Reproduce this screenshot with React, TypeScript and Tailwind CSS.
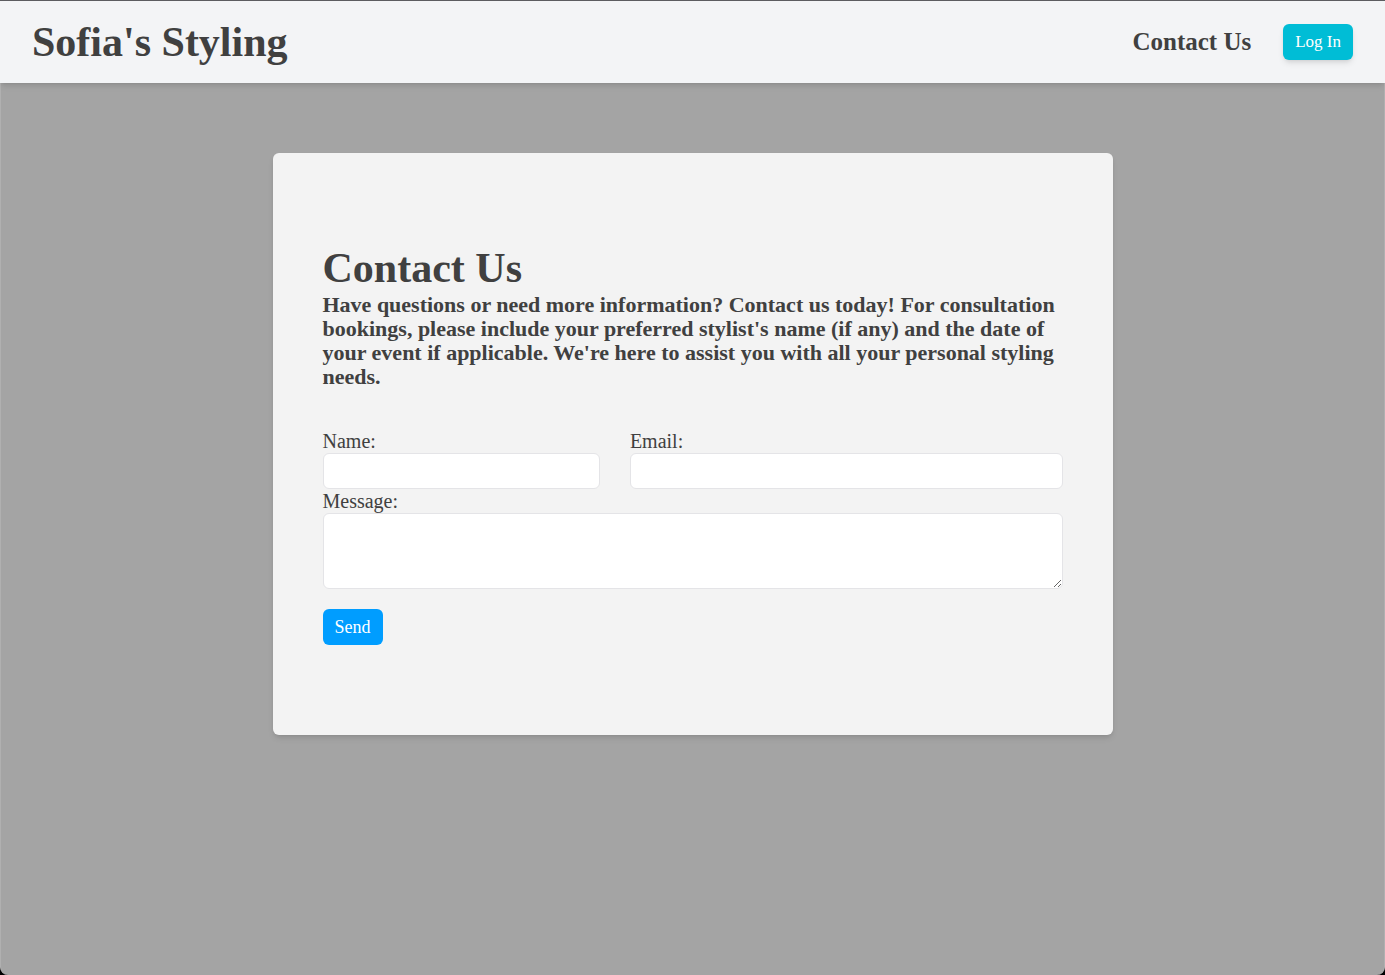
import React from "react";

const fieldClass =
  "block w-full rounded-md border border-[#e4e4e7] bg-white px-3 text-sm text-[#404040] outline-none focus:border-[#009dff]";

const labelClass = "block text-xl leading-6";

function Header() {
  return (
    <header className="relative flex items-center justify-between border-t border-[#5c5c60] bg-[#f3f4f6] px-8 py-[17px] shadow-md">
      <a href="#home" className="text-[42px] leading-[48px] font-semibold">
        Sofia's Styling
      </a>
      <nav className="flex items-center gap-8">
        <a href="#contact" className="text-[25px] leading-8 font-semibold">
          Contact Us
        </a>
        <button
          type="button"
          className="h-9 rounded-md bg-[#00bdd6] px-3 text-[17px] text-white shadow-md"
        >
          Log In
        </button>
      </nav>
    </header>
  );
}

function ContactForm() {
  return (
    <form className="mt-10" onSubmit={(event) => event.preventDefault()}>
      <div className="grid grid-cols-[277fr_432fr] gap-[30px]">
        <div>
          <label htmlFor="name" className={labelClass}>
            Name:
          </label>
          <input id="name" type="text" className={`${fieldClass} h-9`} />
        </div>
        <div>
          <label htmlFor="email" className={labelClass}>
            Email:
          </label>
          <input id="email" type="email" className={`${fieldClass} h-9`} />
        </div>
      </div>
      <label htmlFor="message" className={labelClass}>
        Message:
      </label>
      <textarea id="message" className={`${fieldClass} h-19 resize py-2`} />
      <button
        type="submit"
        className="mt-5 h-9 rounded-md bg-[#009dff] px-3 text-lg text-white"
      >
        Send
      </button>
    </form>
  );
}

export default function App() {
  return (
    <div className="flex min-h-screen flex-col bg-black font-['Liberation_Serif',serif] text-[#404040]">
      <Header />
      <main className="flex-1 rounded-b-lg border-x border-[#b0b0b0] bg-[#a4a4a4] px-6 py-[70px]">
        <section className="mx-auto max-w-[840px] rounded-md bg-[#f3f3f3] px-[50px] py-[90px] shadow-md">
          <h1 className="text-[42px] leading-[50px] font-bold">Contact Us</h1>
          <p className="text-[22px] leading-6 font-semibold">
            Have questions or need more information? Contact us today! For
            consultation bookings, please include your preferred stylist's name
            (if any) and the date of your event if applicable. We're here to
            assist you with all your personal styling needs.
          </p>
          <ContactForm />
        </section>
      </main>
    </div>
  );
}
